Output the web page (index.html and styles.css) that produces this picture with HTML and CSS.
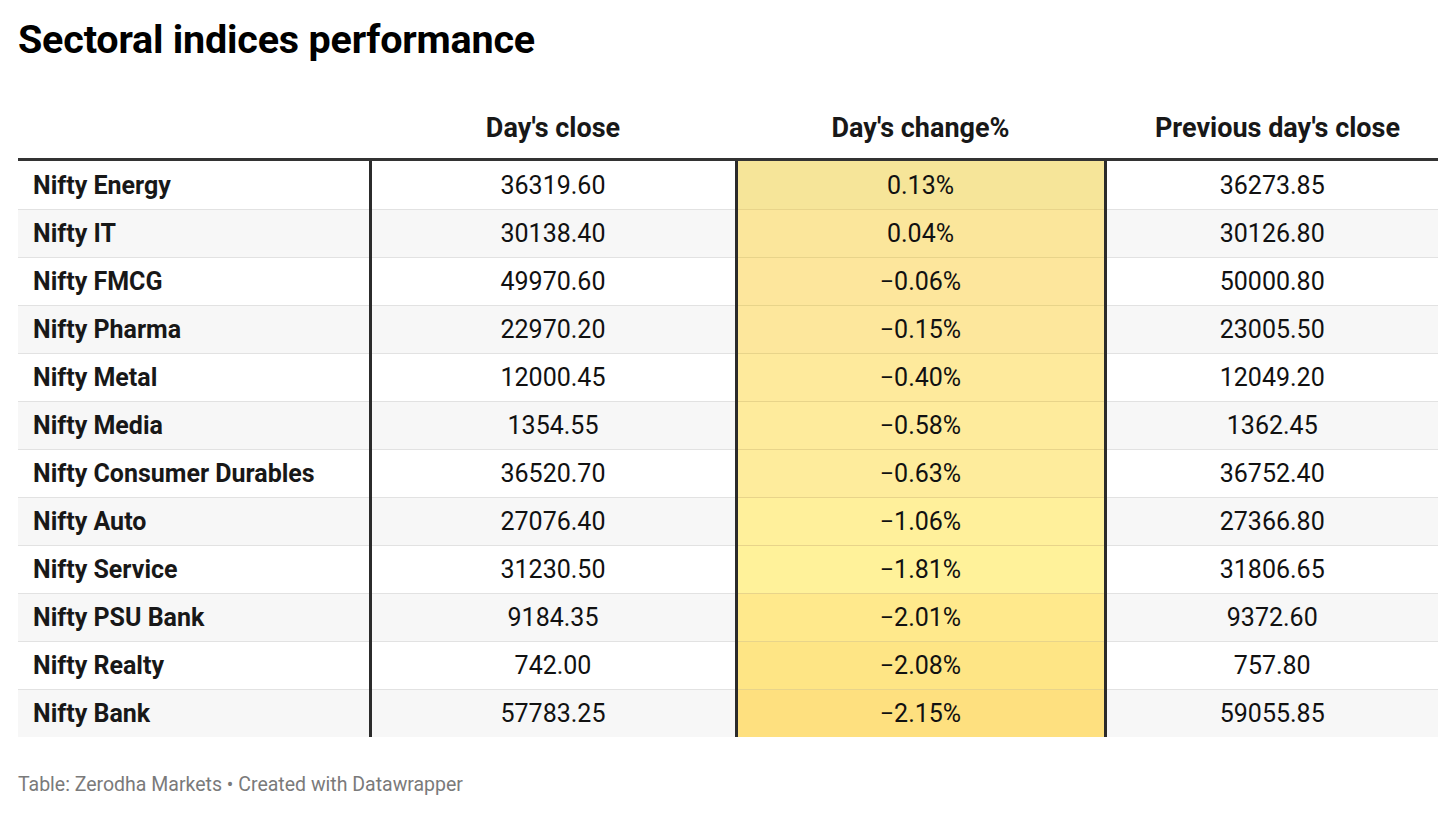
FILE: index.html
```html
<!DOCTYPE html>
<html>
<head>
<meta charset="utf-8">
<link rel="stylesheet" href="styles.css">
</head>
<body>
<div class="chart">
  <h1 class="title">Sectoral indices performance</h1>
  <table class="tbl">
    <thead>
      <tr>
        <th class="c-name"></th>
        <th class="c-num">Day's close</th>
        <th class="c-num">Day's change%</th>
        <th class="c-num c-prev">Previous day's close</th>
      </tr>
    </thead>
    <tbody>
      <tr><td class="name">Nifty Energy</td><td class="num bl">36319.60</td><td class="num heat" style="background:#f6e599">0.13%</td><td class="num">36273.85</td></tr>
      <tr><td class="name">Nifty IT</td><td class="num bl">30138.40</td><td class="num heat" style="background:#fbe69b">0.04%</td><td class="num">30126.80</td></tr>
      <tr><td class="name">Nifty FMCG</td><td class="num bl">49970.60</td><td class="num heat" style="background:#fde69c">−0.06%</td><td class="num">50000.80</td></tr>
      <tr><td class="name">Nifty Pharma</td><td class="num bl">22970.20</td><td class="num heat" style="background:#fde79c">−0.15%</td><td class="num">23005.50</td></tr>
      <tr><td class="name">Nifty Metal</td><td class="num bl">12000.45</td><td class="num heat" style="background:#feea9c">−0.40%</td><td class="num">12049.20</td></tr>
      <tr><td class="name">Nifty Media</td><td class="num bl">1354.55</td><td class="num heat" style="background:#feeb9c">−0.58%</td><td class="num">1362.45</td></tr>
      <tr><td class="name">Nifty Consumer Durables</td><td class="num bl">36520.70</td><td class="num heat" style="background:#feec9c">−0.63%</td><td class="num">36752.40</td></tr>
      <tr><td class="name">Nifty Auto</td><td class="num bl">27076.40</td><td class="num heat" style="background:#fff09b">−1.06%</td><td class="num">27366.80</td></tr>
      <tr><td class="name">Nifty Service</td><td class="num bl">31230.50</td><td class="num heat" style="background:#fff29a">−1.81%</td><td class="num">31806.65</td></tr>
      <tr><td class="name">Nifty PSU Bank</td><td class="num bl">9184.35</td><td class="num heat" style="background:#ffe98c">−2.01%</td><td class="num">9372.60</td></tr>
      <tr><td class="name">Nifty Realty</td><td class="num bl">742.00</td><td class="num heat" style="background:#fee585">−2.08%</td><td class="num">757.80</td></tr>
      <tr><td class="name">Nifty Bank</td><td class="num bl">57783.25</td><td class="num heat" style="background:#fee07f">−2.15%</td><td class="num">59055.85</td></tr>
    </tbody>
  </table>
  <div class="footer">Table: Zerodha Markets • Created with Datawrapper</div>
</div>
</body>
</html>
```

FILE: styles.css
```css
html, body {
  margin: 0;
  padding: 0;
  background: #ffffff;
}
body {
  font-family: Roboto, "Liberation Sans", sans-serif;
  color: #181818;
}
.chart {
  padding: 16px 18px 0 18px;
}
.title {
  margin: 0;
  font-size: 39.5px;
  font-weight: 700;
  line-height: 48px;
  color: #000;
  letter-spacing: -0.2px;
}
.tbl {
  margin-top: 29px;
  width: 1420px;
  border-collapse: collapse;
  table-layout: fixed;
}
.tbl th {
  font-size: 27px;
  font-weight: 700;
  color: #181818;
  height: 51px;
  padding: 0 0 14px 0;
  vertical-align: bottom;
  border-bottom: 3px solid #333333;
}
.c-name { width: 352px; }
.tbl th.c-num { text-align: center; }
.tbl th:nth-child(2) { width: 366px; }
.tbl th:nth-child(3) { width: 369px; }
.tbl th.c-prev { padding-left: 12px; }
.tbl td {
  height: 47px;
  padding: 0;
  font-size: 25px;
  border-top: 1px solid #e2e2e2;
  vertical-align: middle;
}
.tbl tbody tr:first-child td { border-top: none; height: 48px; }
.tbl tbody tr:nth-child(even) td { background: #f7f7f7; }
.tbl td.name {
  font-weight: 700;
  padding-left: 15px;
  color: #181818;
}
.tbl td.num {
  text-align: center;
  font-weight: 400;
  color: #111;
}
.tbl td.bl { border-left: 3px solid #2b2b2b; }
.tbl td.heat {
  border-left: 3px solid #2b2b2b;
  border-right: 3px solid #2b2b2b;
  border-top-color: #e8d48a;
}
.footer {
  margin-top: 36px;
  font-size: 19.5px;
  color: #7a7a7a;
}
```
